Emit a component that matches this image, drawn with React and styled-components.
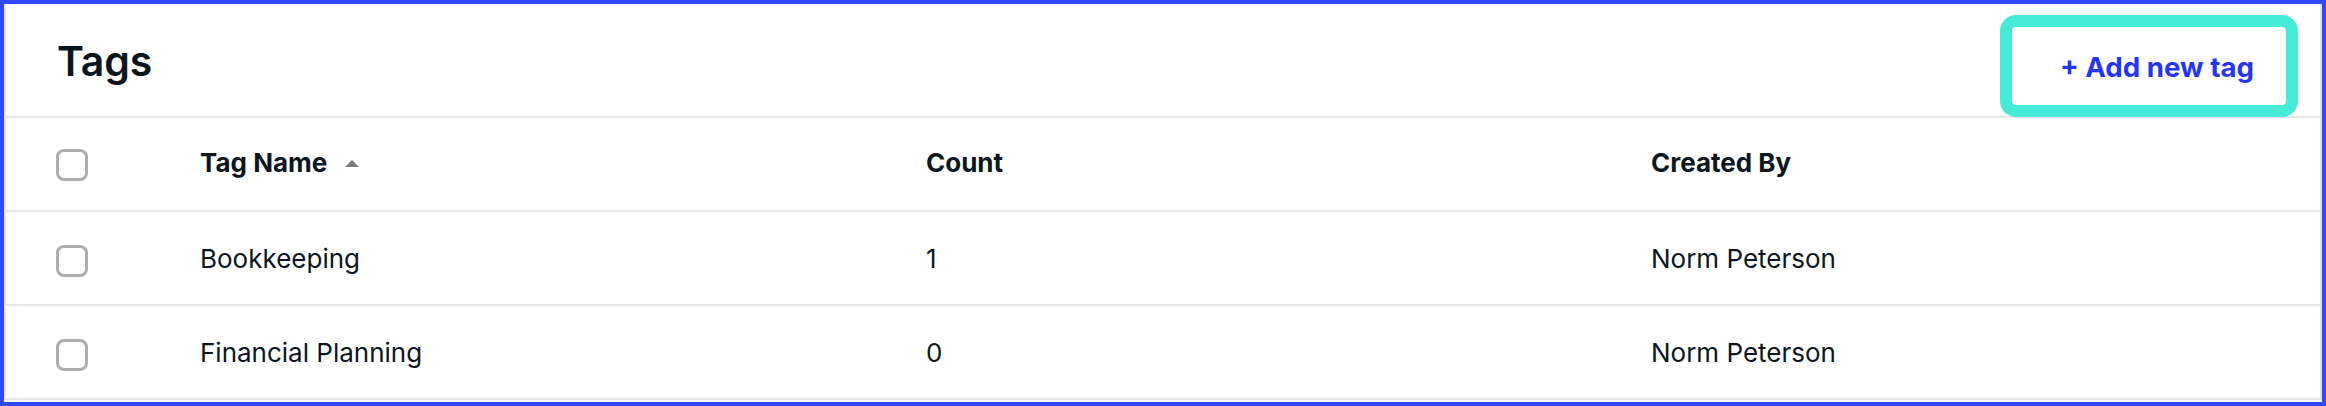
import React from 'react'
import styled, { createGlobalStyle } from 'styled-components'

const GlobalStyle = createGlobalStyle`
  html, body {
    margin: 0;
    padding: 0;
    background: #fff;
  }
  body {
    font-family: Inter, "Noto Sans", "Liberation Sans", sans-serif;
    color: #0b1621;
  }
`

const tags = [
  { name: 'Bookkeeping', count: 1, createdBy: 'Norm Peterson' },
  { name: 'Financial Planning', count: 0, createdBy: 'Norm Peterson' },
]

function App() {
  return (
    <>
      <GlobalStyle />
      <Frame>
        <Card>
          <Header>
            <Title>Tags</Title>
            <AddButton type="button">+ Add new tag</AddButton>
          </Header>

          <Row $head>
            <Checkbox />
            <HeadCell>
              Tag Name
              <SortArrow />
            </HeadCell>
            <HeadCell>Count</HeadCell>
            <HeadCell>Created By</HeadCell>
          </Row>

          {tags.map((t) => (
            <Row key={t.name}>
              <Checkbox />
              <Cell>{t.name}</Cell>
              <Cell>{t.count}</Cell>
              <Cell>{t.createdBy}</Cell>
            </Row>
          ))}
        </Card>
      </Frame>
    </>
  )
}

export default App

const Frame = styled.div`
  box-sizing: border-box;
  width: 2326px;
  height: 406px;
  border: 4px solid #3049ff;
  background: #fff;
`

const Card = styled.div`
  border-left: 2px solid #e4e4e4;
  border-right: 2px solid #e4e4e4;
  background: #fff;
`

const Header = styled.div`
  box-sizing: border-box;
  height: 114px;
  display: flex;
  justify-content: space-between;
  align-items: flex-start;
  padding: 0 22px 0 51px;
  border-bottom: 2px solid #e8e8e8;
`

const Title = styled.h1`
  margin: 32px 0 0;
  font-size: 41px;
  font-weight: 600;
  line-height: normal;
  letter-spacing: -0.2px;
  color: #0a1520;
`

const AddButton = styled.button`
  box-sizing: border-box;
  position: relative;
  z-index: 1;
  margin-top: 11px;
  width: 298px;
  height: 102px;
  padding: 2px 0 0 16px;
  border: 12px solid #45ebd6;
  border-radius: 16px;
  background: #fff;
  font-family: Inter, "Noto Sans", sans-serif;
  font-size: 27.7px;
  font-weight: 700;
  color: #2634f5;
  cursor: pointer;
`

const Row = styled.div`
  box-sizing: border-box;
  height: 94px;
  display: grid;
  grid-template-columns: 144px 726px 725px 1fr;
  align-items: center;
  padding-left: 50px;
  padding-bottom: ${(p) => (p.$head ? '4px' : '0')};
  border-bottom: 2px solid #e8e8e8;
`

const Checkbox = styled.span`
  box-sizing: border-box;
  display: block;
  width: 32px;
  height: 32px;
  margin-top: 6px;
  border: 3px solid #adadad;
  border-radius: 8px;
  background: #fff;
`

const Cell = styled.div`
  font-size: 26px;
  font-weight: 400;
  color: #0b1621;
  white-space: nowrap;
`

const HeadCell = styled(Cell)`
  display: flex;
  align-items: center;
  gap: 18px;
  font-weight: 700;
`

const SortArrow = styled.span`
  width: 0;
  height: 0;
  margin-top: 2px;
  border-left: 7px solid transparent;
  border-right: 7px solid transparent;
  border-bottom: 7px solid #7a7a7a;
`
